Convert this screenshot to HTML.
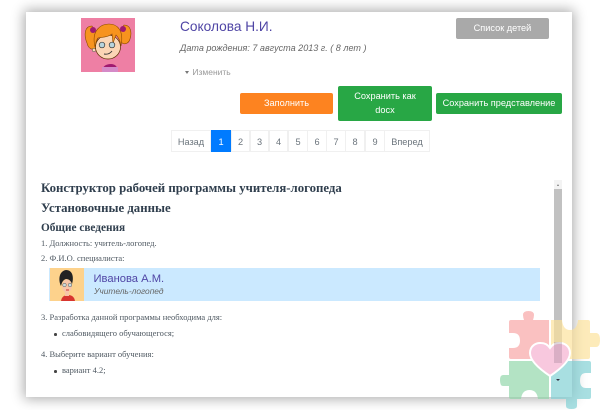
<!DOCTYPE html>
<html><head><meta charset="utf-8">
<style>
html,body{margin:0;padding:0;background:#fff}
body{width:600px;height:410px;position:relative;overflow:hidden;font-family:"Liberation Sans",sans-serif}
.a{position:absolute;white-space:nowrap}
#card{left:26px;top:12px;width:546px;height:385px;background:#fff;box-shadow:0 0 12px 2px rgba(0,0,0,.33)}
.btn{color:#fff;font-size:9.2px;text-align:center;border-radius:2px;box-sizing:border-box}
.pg{top:130px;height:22px;line-height:22px;font-size:9.2px;color:#6c757d;text-align:center;border:1px solid #f0f0f0;box-sizing:border-box;background:#fff}
.s{font-family:"Liberation Serif",serif;color:#2f3e4d;font-weight:bold}
.t{font-family:"Liberation Serif",serif;color:#4f5962;font-size:8.5px}
.d{width:2.5px;height:2.5px;border-radius:50%;background:#444}
</style></head><body>
<div class="a" id="card"></div>

<svg class="a" style="left:81px;top:18px" width="54" height="54" viewBox="0 0 54 54">
<rect width="54" height="54" fill="#ee7fa4"/>
<path d="M21 53 Q22 46 30 46 Q36 46 37 53Z" fill="#a01a70"/><rect x="21" y="49" width="16" height="5" fill="#d58ac8"/>
<path d="M11 8 C3 8 3 18 6 25 C7 30 11 33 15 30 L17 18Z M43 7 C50 7 51 15 49 21 C48 25 44 27 41 25 L38 14Z" fill="#f7931e" stroke="#8a4a00" stroke-width=".6"/>
<circle cx="13" cy="32" r="1.800" fill="#fbd5b5" stroke="#444" stroke-width=".5"/>
<ellipse cx="27" cy="29" rx="12.500" ry="12" fill="#fbd5b5" stroke="#5a3000" stroke-width=".7"/>
<path d="M14 29 C10 12 20 6 28 6 C37 6 43 13 40 28 C39 23 38 20 35 17 L32 25 L31 16 C26 20 20 19 17 20 C15 22 15 25 14 29Z" fill="#f7931e" stroke="#8a4a00" stroke-width=".6"/>
<ellipse cx="12" cy="12" rx="3" ry="3" fill="#a01a70"/><ellipse cx="42" cy="11" rx="3" ry="3" fill="#a01a70"/>
<circle cx="21" cy="27" r="2.800" fill="#b8d4dd" stroke="#333" stroke-width=".7"/><circle cx="31" cy="27" r="2.800" fill="#b8d4dd" stroke="#333" stroke-width=".7"/>
<path d="M23 36 Q28 37 31 33" fill="none" stroke="#333" stroke-width=".9"/>
</svg>

<div class="a" style="left:180px;top:19px;font-size:13.7px;color:#4f45a5">Соколова Н.И.</div>
<div class="a" style="left:180px;top:43px;font-size:9.05px;font-style:italic;color:#666">Дата рождения: 7 августа 2013 г. ( 8 лет )</div>
<div class="a" style="left:185px;top:67px;font-size:8.5px;color:#999"><span style="display:inline-block;width:0;height:0;border:2.5px solid transparent;border-top:3px solid #777;border-bottom:0;vertical-align:1px;margin-right:1px"></span> Изменить</div>

<div class="a btn" style="left:456px;top:18px;width:93px;height:21px;line-height:21px;background:#a9a9a9">Список детей</div>
<div class="a btn" style="left:240px;top:93px;width:93px;height:21px;line-height:21px;background:#fd8320">Заполнить</div>
<div class="a btn" style="left:338px;top:86px;width:94px;height:35px;line-height:13.5px;padding-top:4px;background:#28a745">Сохранить как<br>docx</div>
<div class="a btn" style="left:436px;top:93px;width:126px;height:21px;line-height:21px;background:#28a745">Сохранить представление</div>

<div class="a pg" style="left:171px;width:40px">Назад</div>
<div class="a pg" style="left:211px;width:20px;background:#007bff;color:#fff;border-color:#007bff">1</div>
<div class="a pg" style="left:231px;width:19px">2</div>
<div class="a pg" style="left:250px;width:19px">3</div>
<div class="a pg" style="left:269px;width:19px">4</div>
<div class="a pg" style="left:288px;width:20px">5</div>
<div class="a pg" style="left:307px;width:20px">6</div>
<div class="a pg" style="left:326px;width:20px">7</div>
<div class="a pg" style="left:345px;width:20px">8</div>
<div class="a pg" style="left:365px;width:20px">9</div>
<div class="a pg" style="left:384px;width:46px">Вперед</div>

<div class="a s" style="left:41px;top:181px;font-size:12.8px">Конструктор рабочей программы учителя-логопеда</div>
<div class="a s" style="left:41px;top:201px;font-size:12.8px">Установочные данные</div>
<div class="a s" style="left:41px;top:221px;font-size:11.3px;line-height:15px">Общие сведения</div>
<div class="a t" style="left:41px;top:238px">1. Должность: учитель-логопед.</div>
<div class="a t" style="left:41px;top:253px">2. Ф.И.О. специалиста:</div>

<div class="a" style="left:49px;top:268px;width:491px;height:33px;background:#cbe9ff"></div>
<svg class="a" style="left:50px;top:268px" width="34" height="33" viewBox="0 0 34 33">
<rect width="34" height="33" fill="#fdd28c"/>
<path d="M11 33 Q12 27 18 27 Q24 27 25 33Z" fill="#d8352f"/>
<rect x="15" y="23" width="4" height="5" fill="#f7c5a8"/>
<ellipse cx="17" cy="18" rx="5" ry="6.500" fill="#f7c5a8"/>
<path d="M11 18 C8 12 9 3 16 2 C23 2 24 10 22 16 C21 13 19 11 16 11 C13 12 12 14 11 18Z" fill="#222"/>
<circle cx="14.500" cy="17" r="1.800" fill="#cdd" stroke="#555" stroke-width=".5"/><circle cx="20" cy="17" r="1.800" fill="#cdd" stroke="#555" stroke-width=".5"/>
<path d="M16 22 H19" stroke="#c33" stroke-width="1"/>
</svg>
<div class="a" style="left:93.500px;top:273px;font-size:11.2px;color:#4f45a5">Иванова А.М.</div>
<div class="a" style="left:94px;top:286px;font-size:8.4px;font-style:italic;color:#666">Учитель-логопед</div>

<div class="a t" style="left:41px;top:312px">3. Разработка данной программы необходима для:</div>
<div class="a d" style="left:54px;top:333px"></div>
<div class="a t" style="left:62px;top:328px">слабовидящего обучающегося;</div>
<div class="a t" style="left:41px;top:349px">4. Выберите вариант обучения:</div>
<div class="a d" style="left:54px;top:370px"></div>
<div class="a t" style="left:62px;top:365px">вариант 4.2;</div>

<div class="a" style="left:554px;top:180px;width:8px;height:9px;background:#f3f3f3"></div>
<div class="a" style="left:556.5px;top:183.500px;width:0;height:0;border:1.500px solid transparent;border-bottom:2px solid #777;border-top:0"></div>
<div class="a" style="left:554px;top:189px;width:8px;height:174px;background:#c1c1c1"></div>

<svg class="a" style="left:500px;top:310px" width="100" height="100" viewBox="0 0 100 100">
<g opacity=".68">
<path d="M11 10 H24 Q23 7 23 5 Q23 1 28.500 1 Q34 1 34 5 Q34 7 33 10 H49 V49 H11 Q9 49 9 47 V38 H13 Q20 38 20 30.500 Q20 23 13 23 H9 V12 Q9 10 11 10Z" fill="#f8a5a5"/>
<path d="M51 10 H62 Q63 20 70 20 Q77 20 78 10 H88 Q90 10 90 12 V23 H96 Q100 23 100 30 Q100 37 96 37 H90 V47 Q90 49 88 49 H51Z" fill="#fde29a"/>
<path d="M9 51 H49 V89 H38 Q37 80 29.500 80 Q22 80 21 89 H11 Q9 89 9 87 V76 H3 Q0 76 0 70 Q0 65 3 65 H9Z" fill="#90d6a9"/>
<path d="M51 51 H89 Q91 51 91 53 V63 H86 Q80 63 80 70.500 Q80 78 86 78 H91 V87 Q91 89 89 89 H77 V96 Q77 99 71.500 99 Q66 99 66 96 V89 H51Z" fill="#7fd0d4"/>
</g>
<path d="M50 66 C38 58 30 50 30 43 C30 36 36 32.500 41 33 C45 33 48 35 50 38 C52 35 55 33 59 33 C64 32.500 70 36 70 43 C70 50 62 58 50 66Z" fill="#f8c8de" stroke="#fff" stroke-width="2"/>
</svg>
<div class="a" style="left:556px;top:378.500px;width:0;height:0;border:2px solid transparent;border-top:2.500px solid #334;border-bottom:0"></div>
<div class="a" style="left:554px;top:342px;width:8px;height:21px;background:rgba(150,120,140,.3)"></div>
</body></html>
